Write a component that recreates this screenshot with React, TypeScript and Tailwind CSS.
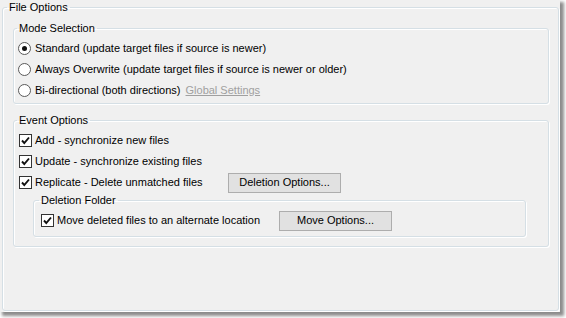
import React from "react";

const font = { fontFamily: "'Liberation Sans', Arial, sans-serif" };

function Radio({ checked }: { checked?: boolean }) {
  return (
    <span className="w-[13px] h-[13px] rounded-full border border-[#5a5a5a] bg-white flex items-center justify-center shrink-0">
      {checked && <span className="w-[5px] h-[5px] rounded-full bg-[#111]" />}
    </span>
  );
}

function Check() {
  return (
    <span className="w-[13px] h-[13px] border border-[#333] bg-white flex items-center justify-center shrink-0">
      <svg width="11" height="11" viewBox="0 0 11 11">
        <path d="M2 5.5 L4.3 8 L9 2.5" fill="none" stroke="#111" strokeWidth="1.9" />
      </svg>
    </span>
  );
}

function WinButton({ children, className = "" }: { children: React.ReactNode; className?: string }) {
  return (
    <button className={`h-[20px] bg-[#e1e1e1] border border-[#adadad] text-[11px] text-black leading-none ${className}`}>
      {children}
    </button>
  );
}

function Group({
  title, className = "", legendClass = "ml-[4px]", children,
}: { title: string; className?: string; legendClass?: string; children: React.ReactNode }) {
  return (
    <fieldset className={`border border-[#d5dfe5] rounded-[3px] shadow-[inset_1px_1px_0_#fff,1px_1px_0_#fff] ${className}`}>
      <legend className={`px-[2px] leading-[13px] h-[13px] ${legendClass}`}>{title}</legend>
      {children}
    </fieldset>
  );
}

export default function App() {
  return (
    <div className="w-[566px] h-[318px] bg-white text-[11px] text-black overflow-hidden" style={font}>
      <div className="w-[560px] h-[312px] bg-[#f0f0f0] shadow-[3px_3px_3px_1px_rgba(0,0,0,0.45)] pt-[1px] pl-[2px]">
        <Group title="File Options" className="w-[557px] h-[310px]">
          <div className="pl-[10px] pt-[8px]">
            {/* Mode Selection */}
            <Group title="Mode Selection" className="w-[536px]" legendClass="ml-[3px]">
              <div className="pl-[4px] pt-[5px] pb-[5px] flex flex-col gap-[5px]">
                <label className="h-[16px] flex items-center gap-[4px]">
                  <Radio checked />
                  <span>Standard (update target files if source is newer)</span>
                </label>
                <label className="h-[16px] flex items-center gap-[4px]">
                  <Radio />
                  <span>Always Overwrite (update target files if source is newer or older)</span>
                </label>
                <label className="h-[16px] flex items-center gap-[4px]">
                  <Radio />
                  <span>Bi-directional (both directions)</span>
                  <span className="ml-[1px] text-[#a0a0a0] underline">Global Settings</span>
                </label>
              </div>
            </Group>

            {/* Event Options */}
            <Group title="Event Options" className="w-[536px] mt-[10px]" legendClass="ml-[3px]">
              <div className="pl-[5px] pt-[3px] pb-[9px]">
                <label className="h-[21px] flex items-center gap-[3px]">
                  <Check />
                  <span>Add - synchronize new files</span>
                </label>
                <label className="h-[21px] flex items-center gap-[3px]">
                  <Check />
                  <span>Update - synchronize existing files</span>
                </label>
                <div className="h-[21px] flex items-center">
                  <label className="w-[209px] flex items-center gap-[3px]">
                    <Check />
                    <span>Replicate - Delete unmatched files</span>
                  </label>
                  <WinButton className="w-[113px]">Deletion Options...</WinButton>
                </div>

                <Group title="Deletion Folder" className="w-[493px] ml-[14px] mt-[1px]" legendClass="ml-[5px]">
                  <div className="pl-[7px] pt-[3px] pb-[5px]">
                    <div className="h-[21px] flex items-center">
                      <label className="w-[238px] flex items-center gap-[3px]">
                        <Check />
                        <span>Move deleted files to an alternate location</span>
                      </label>
                      <WinButton className="w-[113px]">Move Options...</WinButton>
                    </div>
                  </div>
                </Group>
              </div>
            </Group>
          </div>
        </Group>
      </div>
    </div>
  );
}
